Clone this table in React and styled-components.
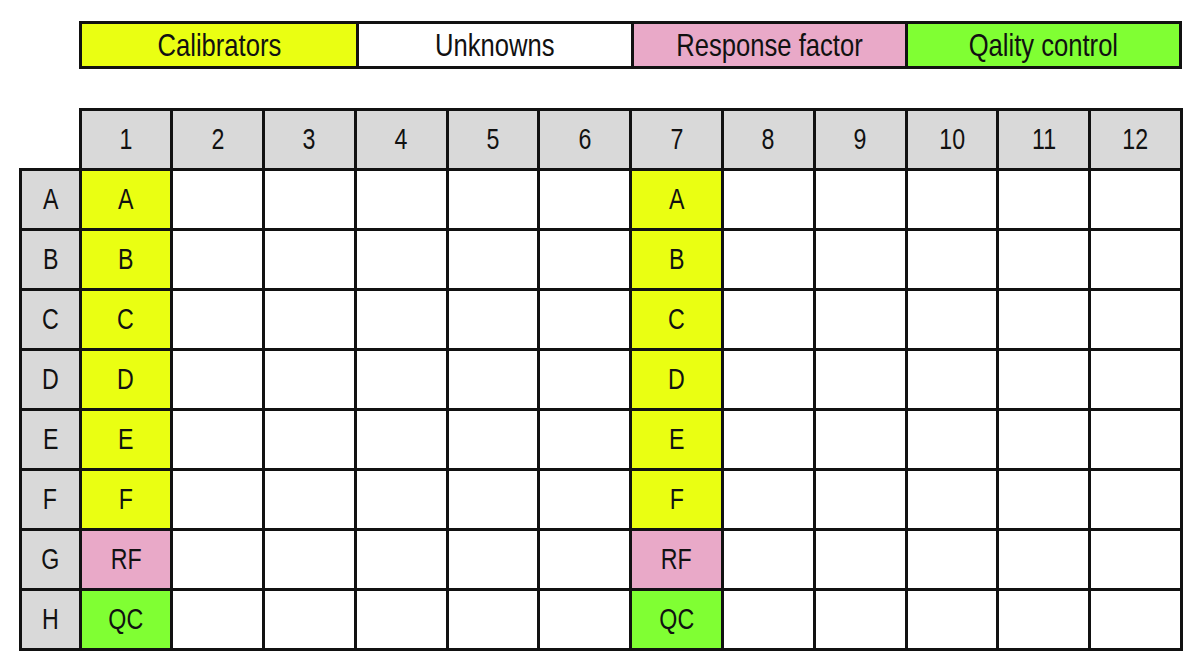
import React from 'react'
import styled, { createGlobalStyle } from 'styled-components'

const GlobalStyle = createGlobalStyle`
	body {
		margin: 0;
		background: #fff;
		font-family: 'Liberation Sans', Arial, sans-serif;
		color: #111;
	}
`

const COLORS = {
	cal: '#eaff12',
	unk: '#ffffff',
	rf: '#e9a9c8',
	qc: '#80ff33',
	head: '#d9d9d9',
}

const Page = styled.div`
	width: 1200px;
	height: 669px;
	padding: 21px 19px 0 19px;
	box-sizing: border-box;
	display: flex;
	flex-direction: column;
	gap: 39px;
`

const Legend = styled.div`
	margin-left: 60px;
	width: 1103px;
	height: 48px;
	box-sizing: border-box;
	border: 3px solid #111;
	display: grid;
	grid-template-columns: repeat(4, 1fr);
`

const LegendItem = styled.div`
	background: ${(p) => COLORS[p.kind]};
	display: flex;
	align-items: center;
	justify-content: center;
	font-size: 32px;
	& + & {
		border-left: 3px solid #111;
	}
`

// narrow face: the plate labels use a condensed sans
const Narrow = styled.span`
	display: inline-block;
	white-space: nowrap;
	transform: scaleX(0.8);
	transform-origin: center;
`

const Plate = styled.table`
	border-collapse: collapse;
	table-layout: fixed;
	width: 1164px;
`

const Corner = styled.td`
	width: 58px;
	border: none;
	padding: 0;
`

const Cell = styled.td`
	height: 57px;
	padding: 0;
	border: 3px solid #111;
	text-align: center;
	vertical-align: middle;
	font-size: 29px;
	background: ${(p) => COLORS[p.kind] || '#fff'};
`

const rows = ['A', 'B', 'C', 'D', 'E', 'F', 'G', 'H']
const cols = [1, 2, 3, 4, 5, 6, 7, 8, 9, 10, 11, 12]

const wellFor = (row) => {
	if (row === 'G') return { kind: 'rf', label: 'RF' }
	if (row === 'H') return { kind: 'qc', label: 'QC' }
	return { kind: 'cal', label: row }
}

export default function App() {
	return (
		<Page>
			<GlobalStyle />
			<Legend>
				<LegendItem kind='cal'><Narrow>Calibrators</Narrow></LegendItem>
				<LegendItem kind='unk'><Narrow>Unknowns</Narrow></LegendItem>
				<LegendItem kind='rf'><Narrow>Response factor</Narrow></LegendItem>
				<LegendItem kind='qc'><Narrow>Qality control</Narrow></LegendItem>
			</Legend>
			<Plate>
				<tbody>
					<tr>
						<Corner />
						{cols.map((c) => (
							<Cell key={c} kind='head'><Narrow>{c}</Narrow></Cell>
						))}
					</tr>
					{rows.map((r) => (
						<tr key={r}>
							<Cell kind='head'><Narrow>{r}</Narrow></Cell>
							{cols.map((c) => {
								const marked = c === 1 || c === 7
								const well = marked ? wellFor(r) : null
								return (
									<Cell key={c} kind={well ? well.kind : 'unk'}>
										{well ? <Narrow>{well.label}</Narrow> : null}
									</Cell>
								)
							})}
						</tr>
					))}
				</tbody>
			</Plate>
		</Page>
	)
}
